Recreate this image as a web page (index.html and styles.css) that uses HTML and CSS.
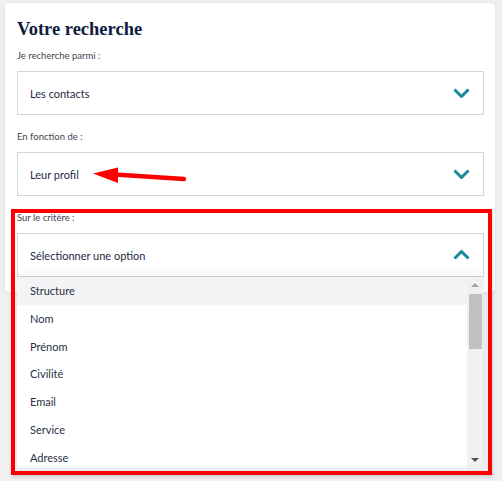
FILE: index.html
```html
<!DOCTYPE html>
<html lang="fr">
<head>
    <meta charset="UTF-8">
    <meta name="viewport" content="width=device-width, initial-scale=1.0">
    <title>Votre recherche</title>
    <link rel="stylesheet" href="styles.css">
</head>
<body>

<section class="search-card">
    <h1>Votre recherche</h1>

    <div class="field">
        <label>Je recherche parmi :</label>
        <div class="select">
            <span>Les contacts</span>
            <svg class="chevron" width="17" height="10" viewBox="0 0 17 10"><polyline points="1.5,1.5 8.5,8.5 15.5,1.5"/></svg>
        </div>
    </div>

    <div class="field">
        <label>En fonction de :</label>
        <div class="select">
            <span>Leur profil</span>
            <svg class="chevron" width="17" height="10" viewBox="0 0 17 10"><polyline points="1.5,1.5 8.5,8.5 15.5,1.5"/></svg>
            <!-- annotation arrow drawn on top of the screenshot -->
            <svg class="annotation-arrow" width="104" height="24" viewBox="0 0 104 24">
                <line x1="26" y1="11.5" x2="95" y2="16" />
                <polygon points="4,10.5 29,4.5 29,20" />
            </svg>
        </div>
    </div>

    <div class="field field-open">
        <label>Sur le critère :</label>
        <div class="select is-open">
            <span>Sélectionner une option</span>
            <svg class="chevron" width="17" height="10" viewBox="0 0 17 10"><polyline points="1.5,8.5 8.5,1.5 15.5,8.5"/></svg>
        </div>

        <div class="options">
            <ul class="options-list">
                <li class="active">Structure</li>
                <li>Nom</li>
                <li>Prénom</li>
                <li>Civilité</li>
                <li>Email</li>
                <li>Service</li>
                <li>Adresse</li>
            </ul>
            <div class="scrollbar">
                <span class="scroll-btn up"></span>
                <span class="scroll-thumb"></span>
                <span class="scroll-btn down"></span>
            </div>
        </div>
    </div>
</section>

<div class="highlight-box"></div>

</body>
</html>
```

FILE: styles.css
```css
body {
    margin: 0;
    height: 481px;
    overflow: hidden;
    position: relative;
    background-color: #f0f0f3;
    font-family: Lato, "Noto Sans", sans-serif;
    color: #1e2a3f;
}
.search-card {
    margin: 3px 7px 0 5px;
    padding: 14px 11px 15px 12px;
    background: #fff;
    border-radius: 4px;
    box-shadow: 0 1px 4px rgba(0,0,0,0.08);
}
h1 {
    margin: 0 0 8px;
    font-family: "Liberation Serif", serif;
    font-size: 18.5px;
    line-height: 24px;
    color: #0f1c3f;
}
label {
    display: block;
    font-size: 9.5px;
    line-height: 14px;
    color: #444450;
    margin-bottom: 8px;
}
.field + .field {
    margin-top: 15px;
}
.field-open {
    position: relative;
}
.select {
    position: relative;
    height: 44px;
    box-sizing: border-box;
    display: flex;
    align-items: center;
    justify-content: space-between;
    padding: 0 13px 0 12px;
    border: 1px solid #d6d6da;
    font-size: 11px;
    color: #1e2a3f;
}
.chevron polyline {
    fill: none;
    stroke: #1b8a9a;
    stroke-width: 3;
}
.annotation-arrow {
    position: absolute;
    left: 71px;
    top: 10px;
}
.annotation-arrow line {
    stroke: #f00;
    stroke-width: 4.5;
    stroke-linecap: round;
}
.annotation-arrow polygon {
    fill: #f00;
}
.options {
    position: absolute;
    left: 0;
    right: 1px;
    top: 100%;
    height: 191px;
    display: flex;
    background: #fff;
    box-shadow: 0 -2px 8px rgba(0,0,0,0.08);
    z-index: 2;
}
.options-list {
    flex: 1;
    margin: 0;
    padding: 0;
    list-style: none;
    overflow: hidden;
}
.options-list li {
    height: 27.8px;
    line-height: 27.8px;
    padding-left: 13px;
    font-size: 11px;
    color: #2a2f45;
}
.options-list li.active {
    background-color: #f4f3f6;
}
.scrollbar {
    width: 16px;
    display: flex;
    flex-direction: column;
    align-items: center;
    background: #f1f1f1;
}
.scroll-btn {
    height: 16px;
    width: 16px;
    position: relative;
}
.scroll-btn::after {
    content: "";
    position: absolute;
    left: 4px;
    top: 6px;
    border-left: 4px solid transparent;
    border-right: 4px solid transparent;
}
.scroll-btn.up::after {
    border-bottom: 4px solid #a3a3a3;
}
.scroll-btn.down {
    margin-top: auto;
}
.scroll-btn.down::after {
    border-top: 4px solid #505050;
}
.scroll-thumb {
    width: 13px;
    height: 55px;
    margin-top: 1px;
    background: #c1c1c1;
}
.highlight-box {
    position: absolute;
    left: 11px;
    top: 209px;
    width: 481px;
    height: 266px;
    box-sizing: border-box;
    border: 4.5px solid #f00;
    box-shadow: 1px 2px 3px rgba(0,0,0,0.15);
    z-index: 3;
}
```
